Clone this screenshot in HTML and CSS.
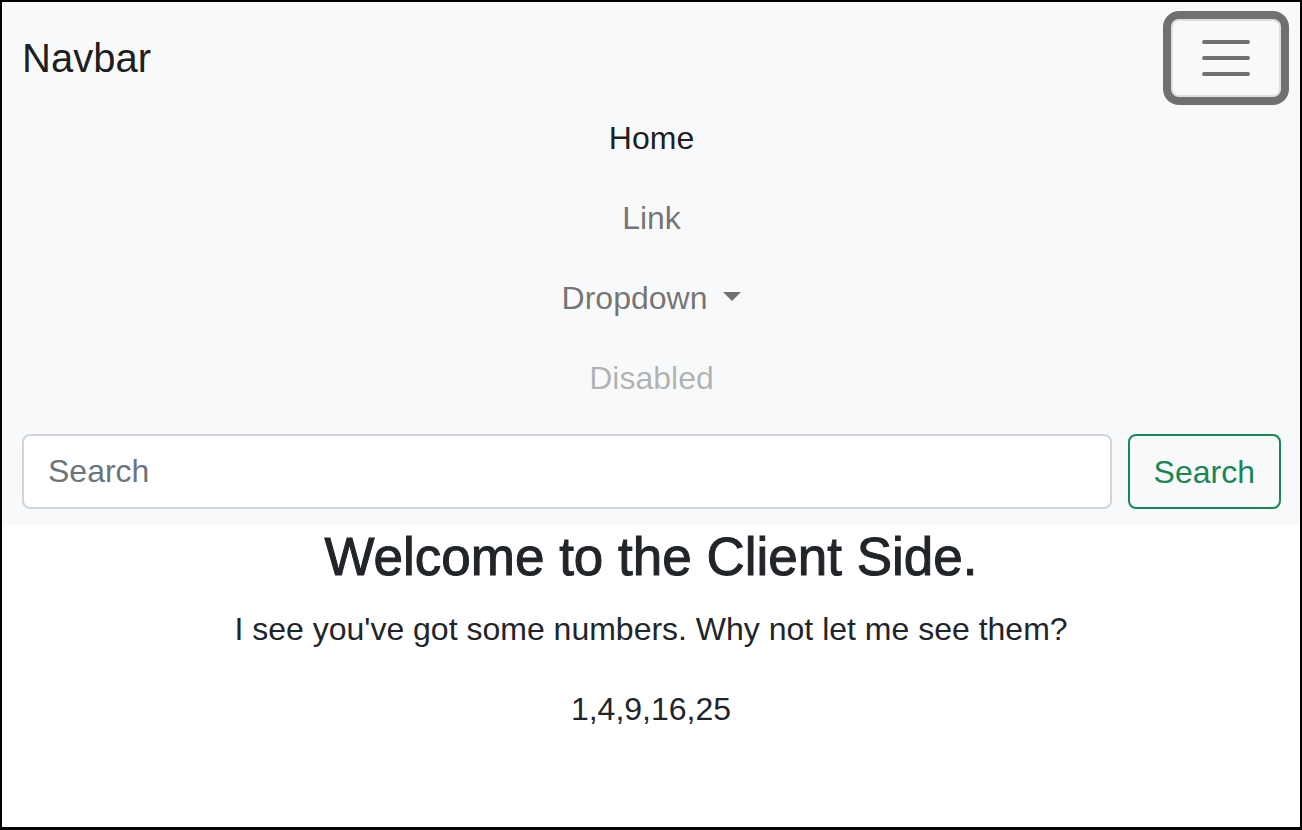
FILE: index.html
```html
<!DOCTYPE html>
<html lang="en">
<head>
<meta charset="utf-8">
<title>Client Side</title>
<link rel="stylesheet" href="styles.css">
</head>
<body>
<div class="frame">
  <nav class="navbar">
    <div class="navbar-inner">
      <div class="brand-row">
        <a class="brand" href="#">Navbar</a>
        <button class="toggler" type="button" aria-label="Toggle navigation">
          <svg class="toggler-icon" viewBox="0 0 30 30" width="60" height="60" xmlns="http://www.w3.org/2000/svg">
            <path stroke="rgba(0,0,0,0.55)" stroke-linecap="round" stroke-miterlimit="10" stroke-width="2" d="M4 7h22M4 15h22M4 23h22"/>
          </svg>
        </button>
      </div>
      <ul class="nav">
        <li><a class="nav-link active" href="#">Home</a></li>
        <li><a class="nav-link" href="#">Link</a></li>
        <li><a class="nav-link dropdown" href="#">Dropdown</a></li>
        <li><a class="nav-link disabled" href="#">Disabled</a></li>
      </ul>
      <form class="search">
        <input class="search-input" type="search" placeholder="Search" aria-label="Search">
        <button class="search-btn" type="button">Search</button>
      </form>
    </div>
  </nav>
  <main class="main">
    <h2 class="title">Welcome to the Client Side.</h2>
    <p class="text">I see you've got some numbers. Why not let me see them?</p>
    <p class="text">1,4,9,16,25</p>
  </main>
</div>
</body>
</html>
```
FILE: styles.css
```css
* { box-sizing: border-box; }

html, body {
  margin: 0;
  padding: 0;
}

body {
  font-family: "Liberation Sans", Arial, sans-serif;
  font-size: 32px;
  line-height: 1.5;
  color: #212529;
  background: #fff;
}

.frame {
  height: 100vh;
  border: 2px solid #000;
  border-bottom-width: 3px;
  overflow: hidden;
}

.navbar {
  background: #f8f9fa;
  padding: 16px 0;
}

.navbar-inner {
  padding: 0 19px 0 20px;
}

.brand-row {
  display: flex;
  align-items: center;
  justify-content: space-between;
}

.brand {
  padding: 10px 0;
  font-size: 40px;
  line-height: 60px;
  color: rgba(0, 0, 0, 0.9);
  text-decoration: none;
  white-space: nowrap;
}

.toggler {
  display: block;
  padding: 7px 23px;
  line-height: 1;
  font-size: 40px;
  background: transparent;
  border: 2px solid rgba(0, 0, 0, 0.1);
  border-radius: 8px;
  box-shadow: 0 0 0 8px rgba(0, 0, 0, 0.55);
  color: rgba(0, 0, 0, 0.55);
  cursor: pointer;
}

.toggler-icon {
  display: block;
  width: 60px;
  height: 60px;
}

.nav {
  list-style: none;
  margin: 0 0 16px;
  padding: 0;
  display: flex;
  flex-direction: column;
  align-items: center;
}

.nav-link {
  display: block;
  padding: 16px 0;
  font-size: 32px;
  line-height: 48px;
  color: rgba(0, 0, 0, 0.55);
  text-decoration: none;
}

.nav-link.active { color: rgba(0, 0, 0, 0.9); }
.nav-link.disabled { color: rgba(0, 0, 0, 0.3); }

.nav-link.dropdown::after {
  content: "";
  display: inline-block;
  margin-left: 16px;
  vertical-align: 8px;
  border-top: 9.6px solid;
  border-right: 9.6px solid transparent;
  border-left: 9.6px solid transparent;
  border-bottom: 0;
}

.search {
  display: flex;
  margin: 0;
}

.search-input {
  flex: 1 1 auto;
  min-width: 0;
  margin-right: 16px;
  padding: 11px 24px;
  font-family: inherit;
  font-size: 32px;
  line-height: 48px;
  height: 75px;
  color: #212529;
  background: #fff;
  border: 2px solid #ced4da;
  border-radius: 8px;
  outline: none;
  -webkit-appearance: none;
  appearance: none;
}

.search-input::placeholder { color: #6c757d; opacity: 1; }

.search-btn {
  flex: 0 0 auto;
  padding: 11px 24px;
  font-family: inherit;
  font-size: 32px;
  line-height: 48px;
  height: 75px;
  color: #198754;
  background: transparent;
  border: 2px solid #198754;
  border-radius: 8px;
  cursor: pointer;
}

.main {
  text-align: center;
}

.title {
  margin: 0 0 16px;
  font-size: 53px;
  line-height: 64px;
  font-weight: 500;
  -webkit-text-stroke: 1px #212529;
}

.text {
  margin: 0 0 32px;
  font-size: 32px;
  line-height: 48px;
}
```
